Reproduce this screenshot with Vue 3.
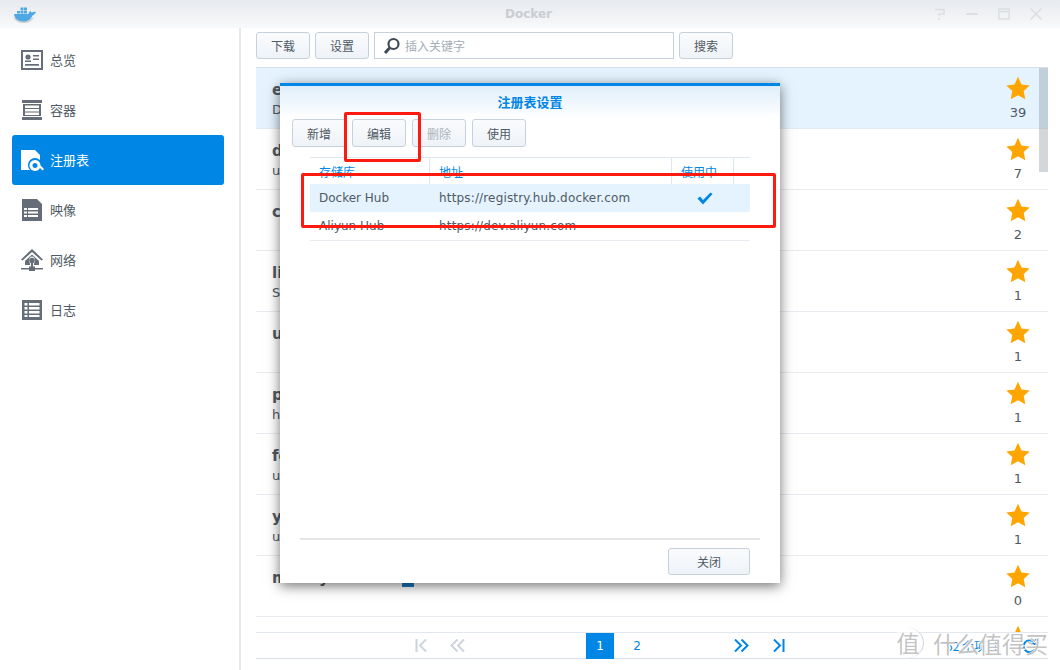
<script setup>
const navItems = [
  { key: 'overview', label: '总览' },
  { key: 'container', label: '容器' },
  { key: 'registry', label: '注册表', active: true },
  { key: 'image', label: '映像' },
  { key: 'network', label: '网络' },
  { key: 'log', label: '日志' }
]

// names are mostly hidden by the dialog
const rows = [
  { name: 'eeacms', desc: 'Docker image', stars: 39, selected: true },
  { name: 'dnmp', desc: 'ubuntu image', stars: 7 },
  { name: 'centos', desc: '', stars: 2 },
  { name: 'linuxserver', desc: 'Sync server', stars: 1 },
  { name: 'ubuntu', desc: '', stars: 1 },
  { name: 'php', desc: 'https', stars: 1 },
  { name: 'fedora', desc: 'ubuntu', stars: 1 },
  { name: 'yum', desc: 'ubuntu', stars: 1 },
  { name: 'moody', desc: '', stars: 0, badge: true },
  { name: '', desc: '', stars: 0 }
]

const modalButtons = [
  { label: '新增' },
  { label: '编辑' },
  { label: '删除', disabled: true },
  { label: '使用' }
]

const starPath = 'M12 0.8l3.5 7.6 8.2 1-6 5.7 1.6 8.2L12 19.2l-7.3 4.1 1.6-8.2-6-5.7 8.2-1z'
</script>

<template>
  <div class="window">
    <header class="titlebar">
      <svg class="logo" width="24" height="18" viewBox="0 0 24 18">
        <path d="M0 11c2 4 6 6 11 6 5 0 8-2 10-6-4 3-15 3-21 0z" fill="#cfd2d2" />
        <path d="M1 8h14c1-1 1.500-2.500 2.500-3.500 0 1 .5 2 1.500 2 1-.5 2-1 4-.5-1 2-2 3-3.500 3.500C18 13 15 15.500 10.500 15.500 5 15.500 1.500 12.500 1 8z" fill="#4fa8e4" />
        <path d="M4 5h3v2.500H4zM7.500 5h3v2.500h-3zM11 5h3v2.500h-3zM7.500 1.500h3v3h-3zM11 1.500h3v3h-3z" fill="#4fa8e4" />
      </svg>
      <span class="title">Docker</span>
      <div class="win-tools">
        <svg width="12" height="12" viewBox="0 0 12 12" fill="none" stroke="#dcdfe2" stroke-width="1.500"><path d="M1 1.500h9v4.500H5v2M5 10v2" /></svg>
        <svg width="12" height="12" viewBox="0 0 12 12" fill="none" stroke="#dcdfe2" stroke-width="2"><path d="M0 6h12" /></svg>
        <svg width="12" height="12" viewBox="0 0 12 12" fill="none" stroke="#dcdfe2" stroke-width="1.500"><path d="M.8 1h10.400v10H.8zM.8 3.500h10.400" /></svg>
        <svg width="12" height="12" viewBox="0 0 12 12" fill="none" stroke="#dcdfe2" stroke-width="1.500"><path d="M.5 .5l11 11M11.500 .5l-11 11" /></svg>
      </div>
    </header>

    <div class="body">
      <aside class="sidebar">
        <div v-for="item in navItems" :key="item.key" class="nav-item" :class="{ active: item.active }">
          <svg class="nav-icon" width="24" height="24" viewBox="0 0 24 24">
            <template v-if="item.key === 'overview'">
              <path fill-rule="evenodd" d="M1 2h22v20H1zM3 4v16h18V4z" />
              <circle cx="8" cy="9" r="2.600" />
              <path d="M5 12.500h6V14H5zM13 7h6v1.500h-6zM13 10.500h6V12h-6zM5 16h14v1.800H5z" />
            </template>
            <template v-else-if="item.key === 'container'">
              <path fill-rule="evenodd" d="M2 2h20v3H2zM2 19h20v3H2zM3 6h18v12H3zM5 7.500V10h14V7.500zM5 11v2.500h14V11zM5 14.500V17h14v-2.500z" />
            </template>
            <template v-else-if="item.key === 'registry'">
              <path d="M1 2h14l5 5v5a7 7 0 0 0-10 10H1z" />
              <path fill-rule="evenodd" d="M15 12a5.500 5.500 0 1 0 .01 0zM15 15a2.500 2.500 0 1 1-.01 0z" />
              <path d="M19 19l1.500-1.500 3.500 3.500-1.500 1.500z" />
            </template>
            <template v-else-if="item.key === 'image'">
              <path fill-rule="evenodd" d="M2 1h15l5 5v17H2zM4 10v2h3v-2zM8 10v2h10v-2zM4 13.500v2h3v-2zM8 13.500v2h10v-2zM4 17v2h3v-2zM8 17v2h10v-2z" />
            </template>
            <template v-else-if="item.key === 'network'">
              <path d="M12 1L1 11.500l1.500 1L12 4l9.500 8.500 1.500-1zM5 13l7-6.500 7 6.500v4h-5v-1.500a5 5 0 0 0 0-6 3 3 0 0 0-4 0 5 5 0 0 0 0 6V17H5z" />
              <circle cx="12" cy="12.500" r="2.800" />
              <path d="M11 15h2v4h-2zM1 20h8v-1.500h6V20h8v1.500h-8V23H9v-1.500H1z" />
            </template>
            <template v-else>
              <path fill-rule="evenodd" d="M2 2h20v20H2zM4.500 5v2.500h3V5zM9 5v2.500h10.500V5zM4.500 9v2.500h3V9zM9 9v2.500h10.500V9zM4.500 13v2.500h3V13zM9 13v2.500h10.500V13zM4.500 17v2h3v-2zM9 17v2h10.500v-2z" />
            </template>
          </svg>
          <span>{{ item.label }}</span>
        </div>
      </aside>

      <main class="main">
        <div class="toolbar">
          <button class="btn">下载</button>
          <button class="btn">设置</button>
          <div class="search">
            <svg width="18" height="18" viewBox="0 0 18 18" fill="none" stroke="#3f4a54">
              <circle cx="10.500" cy="7" r="5" stroke-width="2.200" />
              <path d="M6.500 11L2 16" stroke-width="3" />
            </svg>
            <span>插入关键字</span>
          </div>
          <button class="btn">搜索</button>
        </div>

        <div class="list">
          <div v-for="(row, i) in rows" :key="i" class="row" :class="{ selected: row.selected }">
            <div class="row-text">
              <div class="row-name">
                {{ row.name }}
                <i v-if="row.badge" class="badge"></i>
              </div>
              <div class="row-desc">{{ row.desc }}</div>
            </div>
            <div class="row-stars">
              <svg width="24" height="24" viewBox="0 0 24 24"><path :d="starPath" fill="#ffa500" /></svg>
              <span>{{ row.stars }}</span>
            </div>
          </div>
          <div class="scrollbar"></div>
        </div>

        <div class="pager">
          <svg class="pg pg-first" width="12" height="13" viewBox="0 0 12 13" fill="none" stroke="#ccd4de" stroke-width="2"><path d="M1.500 0v13M11 .500L5 6.500l6 6" /></svg>
          <svg class="pg pg-prev" width="15" height="13" viewBox="0 0 15 13" fill="none" stroke="#ccd4de" stroke-width="2"><path d="M7.500 .500l-6 6 6 6M14 .500l-6 6 6 6" /></svg>
          <span class="page current">1</span>
          <span class="page">2</span>
          <svg class="pg pg-next" width="15" height="13" viewBox="0 0 15 13" fill="none" stroke="#0086e5" stroke-width="2"><path d="M1 .500l6 6-6 6M7.500 .500l6 6-6 6" /></svg>
          <svg class="pg pg-last" width="12" height="13" viewBox="0 0 12 13" fill="none" stroke="#0086e5" stroke-width="2"><path d="M1 .500l6 6-6 6M10.500 0v13" /></svg>
          <span class="total">52 个项目</span>
          <svg class="refresh" width="16" height="16" viewBox="0 0 16 16" fill="none" stroke="#0086e5" stroke-width="2"><path d="M13 11a6 6 0 1 1-1-7M9 6h5V1" /></svg>
        </div>
      </main>
    </div>

    <section class="dialog">
      <h2 class="dialog-title">注册表设置</h2>
      <div class="dialog-tools">
        <button v-for="b in modalButtons" :key="b.label" class="btn" :class="{ disabled: b.disabled }">{{ b.label }}</button>
      </div>
      <div class="table">
        <div class="thead">
          <div class="c1">存储库</div>
          <div class="c2">地址</div>
          <div class="c3">使用中</div>
          <div class="c4"></div>
        </div>
        <div class="tr on">
          <div class="c1">Docker Hub</div>
          <div class="c2 url">https://registry.hub.docker.com</div>
          <div class="c3 mid">
            <svg width="16" height="13" viewBox="0 0 16 13"><path d="M0.500 6.500l2.500-2 3 3.500L13.500 0.500 15.500 2 6 12.500z" fill="#0086e5" /></svg>
          </div>
        </div>
        <div class="tr">
          <div class="c1">Aliyun Hub</div>
          <div class="c2 url">https://dev.aliyun.com</div>
        </div>
      </div>
      <div class="dialog-foot">
        <button class="btn close">关闭</button>
      </div>
    </section>

    <div class="mark mark-edit"></div>
    <div class="mark mark-row"></div>

    <div class="watermark">
      <span class="wm-circle">值</span>
      <span class="wm-text">什么值得买</span>
    </div>
  </div>
</template>

<style scoped>
.window {
  position: relative;
  width: 1060px;
  height: 670px;
  overflow: hidden;
  background: #fff;
  color: #505a64;
  font-family: "DejaVu Sans", "Noto Sans CJK SC", sans-serif;
  font-size: 12px;
}

.titlebar {
  position: relative;
  height: 28px;
  display: flex;
  align-items: center;
  padding: 0 18px 0 13px;
  background: linear-gradient(#e7eaee, #f8f9fa);
}
.logo {
  margin-top: 2px;
}
.title {
  position: absolute;
  left: 505px;
  top: 7px;
  font-size: 12px;
  font-weight: 700;
  color: #c9ced3;
}
.win-tools {
  margin-left: auto;
  display: flex;
  gap: 20px;
}

.body {
  display: flex;
  height: 642px;
}

.sidebar {
  width: 241px;
  flex: none;
  box-sizing: border-box;
  padding: 7px 15px 0 12px;
  border-right: 2px solid #e6e8ea;
}
.nav-item {
  height: 50px;
  display: flex;
  align-items: center;
  gap: 6px;
  padding-left: 8px;
  border-radius: 3px;
  font-family: "Noto Sans CJK SC", sans-serif;
  font-size: 13px;
  color: #505a64;
}
.nav-item span {
  padding-bottom: 2px;
}
.nav-item.active {
  background: #0086e5;
  color: #fff;
}
.nav-icon {
  fill: #656e78;
}
.nav-item.active .nav-icon {
  fill: #fff;
}

.main {
  flex: 1;
  min-width: 0;
  padding: 4px 12px 0 15px;
}

.toolbar {
  display: flex;
  gap: 5px;
  height: 27px;
}
.btn {
  width: 54px;
  height: 27px;
  padding: 0;
  box-sizing: border-box;
  border: 1px solid #c6d1dc;
  border-radius: 3px;
  background: linear-gradient(#fafbfd, #eef3f8);
  color: #505a64;
  font-family: "Noto Sans CJK SC", sans-serif;
  font-size: 12px;
}
.btn.disabled {
  color: #a9b2bb;
}
.search {
  width: 300px;
  box-sizing: border-box;
  border: 1px solid #c6d1dc;
  display: flex;
  align-items: center;
  gap: 4px;
  padding-left: 8px;
  color: #a5adb5;
  font-family: "Noto Sans CJK SC", sans-serif;
}

.list {
  position: relative;
  margin-top: 8px;
  height: 564px;
  overflow: hidden;
  border-top: 1px solid #d5dfea;
}
.row {
  height: 61px;
  box-sizing: border-box;
  display: flex;
  justify-content: space-between;
  padding: 10px 18px 0 16px;
  border-bottom: 1px solid #e8ecf1;
}
.row.selected {
  background: #e4f3fe;
  border-bottom-color: #e4ecf3;
}
.row-text {
  padding-top: 2px;
}
.row-name {
  height: 20px;
  font-size: 15px;
  font-weight: 700;
  line-height: 20px;
  color: #505a64;
}
.badge {
  display: inline-block;
  width: 12px;
  height: 12px;
  margin-left: 68px;
  vertical-align: -4px;
  background: #1d78c1;
}
.row-desc {
  font-size: 13px;
  line-height: 20px;
}
.row-stars {
  width: 24px;
  margin-top: -2px;
  display: flex;
  flex-direction: column;
  align-items: center;
  gap: 5px;
  font-size: 13px;
  line-height: 15px;
}
.row-stars svg {
  flex: none;
}
.scrollbar {
  position: absolute;
  top: 0;
  right: 0;
  width: 9px;
  height: 104px;
  background: rgba(120, 130, 140, 0.32);
}

.pager {
  position: relative;
  height: 27px;
  box-sizing: border-box;
  border-top: 1px solid #e3e8ee;
  border-bottom: 1px solid #d8dee5;
  display: flex;
  align-items: center;
  font-size: 12px;
  color: #0086e5;
}
.pg-first {
  margin-left: 159px;
}
.pg-prev {
  margin-left: 23px;
}
.page {
  width: 28px;
  height: 26px;
  line-height: 26px;
  text-align: center;
}
.page + .page {
  margin-left: 9px;
}
.page.current {
  margin-left: 121px;
  background: #0086e5;
  color: #fff;
}
.pg-next {
  margin-left: 83px;
}
.pg-last {
  margin-left: 24px;
}
.total {
  margin-left: 161px;
  font-family: "Noto Sans CJK SC", "DejaVu Sans", sans-serif;
}
.refresh {
  margin-left: 24px;
}

.dialog {
  position: absolute;
  left: 280px;
  top: 83px;
  width: 500px;
  height: 500px;
  box-sizing: border-box;
  display: flex;
  flex-direction: column;
  border-top: 3px solid #0086e5;
  background: linear-gradient(#dfeefb, #fff 32px);
  box-shadow: 0 3px 12px rgba(0, 0, 0, 0.55);
}
.dialog-title {
  margin: 0;
  height: 33px;
  line-height: 31px;
  text-align: center;
  font-family: "Noto Sans CJK SC", sans-serif;
  font-size: 13px;
  font-weight: 700;
  color: #0086e5;
}
.dialog-tools {
  display: flex;
  gap: 6px;
  padding-left: 12px;
}
.dialog-tools .btn {
  height: 28px;
}
.table {
  margin: 10px 30px 0;
  border-top: 1px solid #dfe7ef;
}
.thead,
.tr {
  display: flex;
}
.thead {
  height: 26px;
  line-height: 27px;
  color: #0086e5;
  font-family: "Noto Sans CJK SC", sans-serif;
}
.thead > div {
  box-sizing: border-box;
  border-right: 1px solid #dfe7ef;
}
.c1 {
  width: 120px;
  padding-left: 9px;
  box-sizing: border-box;
}
.c2 {
  width: 242px;
  padding-left: 9px;
  box-sizing: border-box;
}
.url {
  letter-spacing: 0.16px;
}
.c3 {
  width: 62px;
  padding-left: 9px;
  box-sizing: border-box;
}
.c4 {
  width: 16px;
  border-right: 0 !important;
}
.mid {
  display: flex;
  align-items: center;
  justify-content: center;
  padding-left: 4px;
}
.tr {
  height: 28px;
  line-height: 29px;
}
.tr.on {
  background: #e4f3fe;
}
.tr:last-child {
  border-bottom: 1px solid #e8ecf1;
}
.dialog-foot {
  margin: auto 20px 0;
  height: 45px;
  border-top: 2px solid #e3e5e7;
  display: flex;
  justify-content: flex-end;
  padding: 8px 10px 0 0;
  box-sizing: border-box;
}
.dialog-foot .close {
  width: 82px;
}

.mark {
  position: absolute;
  box-sizing: border-box;
  border: 3px solid #ff1a0f;
  border-radius: 2px;
}
.mark-edit {
  left: 344px;
  top: 112px;
  width: 77px;
  height: 50px;
}
.mark-row {
  left: 301px;
  top: 173px;
  width: 475px;
  height: 55px;
}

.watermark {
  position: absolute;
  left: 893px;
  top: 628px;
  display: flex;
  align-items: center;
  gap: 9px;
  color: rgba(185, 185, 185, 0.85);
  font-family: "Noto Sans CJK SC", sans-serif;
}
.wm-circle {
  width: 30px;
  height: 30px;
  border-right: 1px solid rgba(190, 190, 190, 0.7);
  border-radius: 50%;
  background: rgba(255, 255, 255, 0.6);
  font-size: 23px;
  line-height: 29px;
  text-align: center;
}
.wm-text {
  font-size: 23px;
  line-height: 28px;
  white-space: nowrap;
  text-shadow: 1px 1px 0 #fff, -1px 0 1px #fff;
}
</style>
